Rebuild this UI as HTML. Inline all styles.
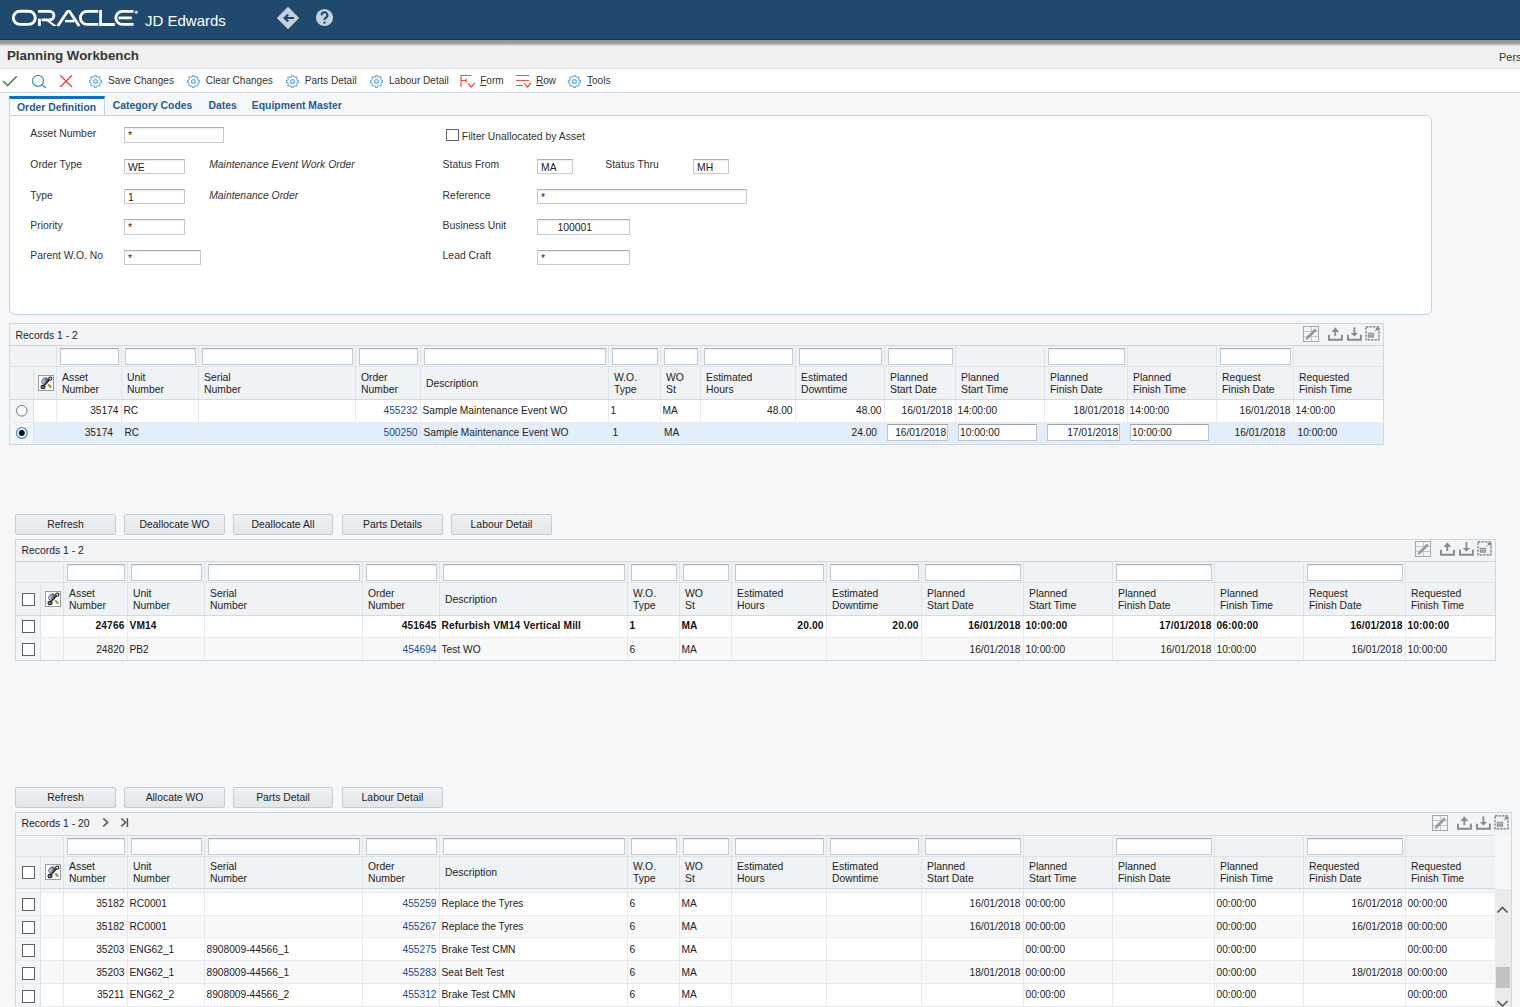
<!DOCTYPE html><html><head><meta charset='utf-8'><style>
*{margin:0;padding:0;box-sizing:border-box}
html,body{width:1520px;height:1007px;overflow:hidden;background:#f6f7f9;font-family:"Liberation Sans", sans-serif;color:#222222}
.a{position:absolute}
.t{position:absolute;white-space:nowrap;font-size:10.4px;line-height:12px}
.d{position:absolute;white-space:nowrap;font-size:10.2px;line-height:12px}
.inp{position:absolute;background:#fff;border:1px solid #c4cad0;border-top-color:#a9b0b7;box-shadow:inset 0 1px 1px rgba(0,0,0,.07)}
.btn{position:absolute;height:21px;border:1px solid #c2ccd6;border-radius:2px;background:linear-gradient(#eff1f3,#e2e6e9);font-size:10.4px;text-align:center;line-height:19px;color:#222}
.cb{position:absolute;width:13px;height:13px;border:1px solid #5f5f5f;background:#fff}
</style></head><body>
<div class='a' style='left:0;top:0;width:1520px;height:39px;background:#1f4a6d'></div>
<div class='a' style='left:0;top:39px;width:1520px;height:1px;background:#2b3036'></div>
<div class='a' style='left:0;top:40px;width:1520px;height:6px;background:linear-gradient(#969696 0%,#9c9c9c 55%,#c4c4c4 78%,#ececec 100%)'></div>
<svg class='a' style='left:0px;top:0px' width='145' height='32' viewBox='0 0 145 32'>
<g fill='none' stroke='#fff' stroke-width='2.8'>
<rect x='13.3' y='11.3' width='22' height='13.1' rx='6.55' ry='6.55' stroke-width='2.9'/>
<path d='M38 11.3 H49.6 a4.3 4.3 0 0 1 0 8.6 H41.6'/>
<path d='M39.4 18.6 V25.9'/>
<path d='M45.3 19.9 L53.3 25.9 H56.9 L48.6 19.9 Z' fill='#fff' stroke='none'/>
<path d='M57.8 25.9 L67.4 11.4 L69.6 11.4 L79.2 25.9' stroke-linejoin='round'/>
<path d='M65 21.1 H74.4' stroke-width='2.5'/>
<path d='M98.3 11.3 H86.9 a6.55 6.55 0 0 0 0 13.1 H98.3'/>
<path d='M100.6 9.9 V24.5 H114.8'/>
<path d='M133.6 11.3 H122.4 a6.55 6.55 0 0 0 0 13.1 H133.6'/>
<path d='M118.6 17.9 H131.8'/>
</g>
<circle cx='136.3' cy='12.2' r='1.6' fill='#c9d3dd'/>
</svg>
<div class='a' style='left:145px;top:10.5px;font-size:15px;line-height:20px;color:#fff;white-space:nowrap'>JD Edwards</div>
<svg class='a' style='left:276px;top:6px' width='24' height='24' viewBox='0 0 24 24'>
<path d='M12 1.8 L22.2 12 L12 22.2 L1.8 12 Z' fill='#c5d0da' stroke='#c5d0da' stroke-width='1.4' stroke-linejoin='round'/>
<path d='M18 12 H9 M12.2 8.5 L8.6 12 L12.2 15.5' stroke='#1f4a6d' stroke-width='2.2' fill='none'/>
</svg>
<svg class='a' style='left:314px;top:7px' width='21' height='21' viewBox='0 0 21 21'>
<circle cx='10.5' cy='10.5' r='8.6' fill='#c5d0da'/>
<path d='M7.6 8.2 a2.9 2.9 0 1 1 4.2 2.5 c-1 .5 -1.3 1 -1.3 2.2' stroke='#1f4a6d' stroke-width='2' fill='none'/>
<circle cx='10.5' cy='15.6' r='1.2' fill='#1f4a6d'/>
</svg>
<div class='a' style='left:0;top:46px;width:1520px;height:22px;background:#f0f0f0'></div>
<div class='a' style='left:0;top:68px;width:1520px;height:1px;background:#dcdfe3'></div>
<div class='a' style='left:7px;top:46.5px;font-size:13.3px;font-weight:bold;line-height:18px;color:#363636;white-space:nowrap'>Planning Workbench</div>
<div class='a' style='left:1499px;top:49.8px;font-size:11px;line-height:14px;color:#333;white-space:nowrap'>Pers</div>
<div class='a' style='left:0;top:69px;width:1520px;height:23px;background:#fff'></div>
<div class='a' style='left:0;top:92px;width:1520px;height:1px;background:#d6dde4'></div>
<svg class='a' style='left:0;top:69px' width='80' height='23' viewBox='0 69 80 23'>
<path d='M3 81 L7.6 85.6 L16.8 76.2' stroke='#3f8f42' stroke-width='1.6' fill='none'/>
<circle cx='38' cy='80.8' r='5.5' stroke='#3b8fd8' stroke-width='1.3' fill='none'/>
<path d='M42 84.6 L45.8 88' stroke='#3b8fd8' stroke-width='1.4'/>
<path d='M60.2 75.2 L72 87 M72 75.2 L60.2 87' stroke='#da4a4f' stroke-width='1.4'/>
</svg>
<svg class='a' style='left:0;top:0' width='620' height='92'><polygon points='95.50,75.40 95.74,75.40 95.98,75.42 96.22,75.44 96.40,75.83 96.53,76.31 96.63,76.78 96.82,76.83 97.00,76.89 97.18,76.95 97.36,77.02 97.53,77.10 97.70,77.18 97.87,77.27 98.03,77.36 98.44,77.10 98.88,76.85 99.28,76.71 99.46,76.86 99.64,77.02 99.81,77.19 99.98,77.36 100.14,77.54 100.29,77.72 100.15,78.12 99.90,78.56 99.64,78.97 99.73,79.13 99.82,79.30 99.90,79.47 99.98,79.64 100.05,79.82 100.11,80.00 100.17,80.18 100.22,80.37 100.69,80.47 101.17,80.60 101.56,80.78 101.58,81.02 101.60,81.26 101.60,81.50 101.60,81.74 101.58,81.98 101.56,82.22 101.17,82.40 100.69,82.53 100.22,82.63 100.17,82.82 100.11,83.00 100.05,83.18 99.98,83.36 99.90,83.53 99.82,83.70 99.73,83.87 99.64,84.03 99.90,84.44 100.15,84.88 100.29,85.28 100.14,85.46 99.98,85.64 99.81,85.81 99.64,85.98 99.46,86.14 99.28,86.29 98.88,86.15 98.44,85.90 98.03,85.64 97.87,85.73 97.70,85.82 97.53,85.90 97.36,85.98 97.18,86.05 97.00,86.11 96.82,86.17 96.63,86.22 96.53,86.69 96.40,87.17 96.22,87.56 95.98,87.58 95.74,87.60 95.50,87.60 95.26,87.60 95.02,87.58 94.78,87.56 94.60,87.17 94.47,86.69 94.37,86.22 94.18,86.17 94.00,86.11 93.82,86.05 93.64,85.98 93.47,85.90 93.30,85.82 93.13,85.73 92.97,85.64 92.56,85.90 92.12,86.15 91.72,86.29 91.54,86.14 91.36,85.98 91.19,85.81 91.02,85.64 90.86,85.46 90.71,85.28 90.85,84.88 91.10,84.44 91.36,84.03 91.27,83.87 91.18,83.70 91.10,83.53 91.02,83.36 90.95,83.18 90.89,83.00 90.83,82.82 90.78,82.63 90.31,82.53 89.83,82.40 89.44,82.22 89.42,81.98 89.40,81.74 89.40,81.50 89.40,81.26 89.42,81.02 89.44,80.78 89.83,80.60 90.31,80.47 90.78,80.37 90.83,80.18 90.89,80.00 90.95,79.82 91.02,79.64 91.10,79.47 91.18,79.30 91.27,79.13 91.36,78.97 91.10,78.56 90.85,78.12 90.71,77.72 90.86,77.54 91.02,77.36 91.19,77.19 91.36,77.02 91.54,76.86 91.72,76.71 92.12,76.85 92.56,77.10 92.97,77.36 93.13,77.27 93.30,77.18 93.47,77.10 93.64,77.02 93.82,76.95 94.00,76.89 94.18,76.83 94.37,76.78 94.47,76.31 94.60,75.83 94.78,75.44 95.02,75.42 95.26,75.40' fill='none' stroke='#62a8e4' stroke-width='1.05' stroke-linejoin='round'/><circle cx='95.5' cy='81.5' r='1.9' fill='none' stroke='#62a8e4' stroke-width='1.2'/><polygon points='193.40,75.40 193.64,75.40 193.88,75.42 194.12,75.44 194.30,75.83 194.43,76.31 194.53,76.78 194.72,76.83 194.90,76.89 195.08,76.95 195.26,77.02 195.43,77.10 195.60,77.18 195.77,77.27 195.93,77.36 196.34,77.10 196.78,76.85 197.18,76.71 197.36,76.86 197.54,77.02 197.71,77.19 197.88,77.36 198.04,77.54 198.19,77.72 198.05,78.12 197.80,78.56 197.54,78.97 197.63,79.13 197.72,79.30 197.80,79.47 197.88,79.64 197.95,79.82 198.01,80.00 198.07,80.18 198.12,80.37 198.59,80.47 199.07,80.60 199.46,80.78 199.48,81.02 199.50,81.26 199.50,81.50 199.50,81.74 199.48,81.98 199.46,82.22 199.07,82.40 198.59,82.53 198.12,82.63 198.07,82.82 198.01,83.00 197.95,83.18 197.88,83.36 197.80,83.53 197.72,83.70 197.63,83.87 197.54,84.03 197.80,84.44 198.05,84.88 198.19,85.28 198.04,85.46 197.88,85.64 197.71,85.81 197.54,85.98 197.36,86.14 197.18,86.29 196.78,86.15 196.34,85.90 195.93,85.64 195.77,85.73 195.60,85.82 195.43,85.90 195.26,85.98 195.08,86.05 194.90,86.11 194.72,86.17 194.53,86.22 194.43,86.69 194.30,87.17 194.12,87.56 193.88,87.58 193.64,87.60 193.40,87.60 193.16,87.60 192.92,87.58 192.68,87.56 192.50,87.17 192.37,86.69 192.27,86.22 192.08,86.17 191.90,86.11 191.72,86.05 191.54,85.98 191.37,85.90 191.20,85.82 191.03,85.73 190.87,85.64 190.46,85.90 190.02,86.15 189.62,86.29 189.44,86.14 189.26,85.98 189.09,85.81 188.92,85.64 188.76,85.46 188.61,85.28 188.75,84.88 189.00,84.44 189.26,84.03 189.17,83.87 189.08,83.70 189.00,83.53 188.92,83.36 188.85,83.18 188.79,83.00 188.73,82.82 188.68,82.63 188.21,82.53 187.73,82.40 187.34,82.22 187.32,81.98 187.30,81.74 187.30,81.50 187.30,81.26 187.32,81.02 187.34,80.78 187.73,80.60 188.21,80.47 188.68,80.37 188.73,80.18 188.79,80.00 188.85,79.82 188.92,79.64 189.00,79.47 189.08,79.30 189.17,79.13 189.26,78.97 189.00,78.56 188.75,78.12 188.61,77.72 188.76,77.54 188.92,77.36 189.09,77.19 189.26,77.02 189.44,76.86 189.62,76.71 190.02,76.85 190.46,77.10 190.87,77.36 191.03,77.27 191.20,77.18 191.37,77.10 191.54,77.02 191.72,76.95 191.90,76.89 192.08,76.83 192.27,76.78 192.37,76.31 192.50,75.83 192.68,75.44 192.92,75.42 193.16,75.40' fill='none' stroke='#62a8e4' stroke-width='1.05' stroke-linejoin='round'/><circle cx='193.4' cy='81.5' r='1.9' fill='none' stroke='#62a8e4' stroke-width='1.2'/><polygon points='292.50,75.40 292.74,75.40 292.98,75.42 293.22,75.44 293.40,75.83 293.53,76.31 293.63,76.78 293.82,76.83 294.00,76.89 294.18,76.95 294.36,77.02 294.53,77.10 294.70,77.18 294.87,77.27 295.03,77.36 295.44,77.10 295.88,76.85 296.28,76.71 296.46,76.86 296.64,77.02 296.81,77.19 296.98,77.36 297.14,77.54 297.29,77.72 297.15,78.12 296.90,78.56 296.64,78.97 296.73,79.13 296.82,79.30 296.90,79.47 296.98,79.64 297.05,79.82 297.11,80.00 297.17,80.18 297.22,80.37 297.69,80.47 298.17,80.60 298.56,80.78 298.58,81.02 298.60,81.26 298.60,81.50 298.60,81.74 298.58,81.98 298.56,82.22 298.17,82.40 297.69,82.53 297.22,82.63 297.17,82.82 297.11,83.00 297.05,83.18 296.98,83.36 296.90,83.53 296.82,83.70 296.73,83.87 296.64,84.03 296.90,84.44 297.15,84.88 297.29,85.28 297.14,85.46 296.98,85.64 296.81,85.81 296.64,85.98 296.46,86.14 296.28,86.29 295.88,86.15 295.44,85.90 295.03,85.64 294.87,85.73 294.70,85.82 294.53,85.90 294.36,85.98 294.18,86.05 294.00,86.11 293.82,86.17 293.63,86.22 293.53,86.69 293.40,87.17 293.22,87.56 292.98,87.58 292.74,87.60 292.50,87.60 292.26,87.60 292.02,87.58 291.78,87.56 291.60,87.17 291.47,86.69 291.37,86.22 291.18,86.17 291.00,86.11 290.82,86.05 290.64,85.98 290.47,85.90 290.30,85.82 290.13,85.73 289.97,85.64 289.56,85.90 289.12,86.15 288.72,86.29 288.54,86.14 288.36,85.98 288.19,85.81 288.02,85.64 287.86,85.46 287.71,85.28 287.85,84.88 288.10,84.44 288.36,84.03 288.27,83.87 288.18,83.70 288.10,83.53 288.02,83.36 287.95,83.18 287.89,83.00 287.83,82.82 287.78,82.63 287.31,82.53 286.83,82.40 286.44,82.22 286.42,81.98 286.40,81.74 286.40,81.50 286.40,81.26 286.42,81.02 286.44,80.78 286.83,80.60 287.31,80.47 287.78,80.37 287.83,80.18 287.89,80.00 287.95,79.82 288.02,79.64 288.10,79.47 288.18,79.30 288.27,79.13 288.36,78.97 288.10,78.56 287.85,78.12 287.71,77.72 287.86,77.54 288.02,77.36 288.19,77.19 288.36,77.02 288.54,76.86 288.72,76.71 289.12,76.85 289.56,77.10 289.97,77.36 290.13,77.27 290.30,77.18 290.47,77.10 290.64,77.02 290.82,76.95 291.00,76.89 291.18,76.83 291.37,76.78 291.47,76.31 291.60,75.83 291.78,75.44 292.02,75.42 292.26,75.40' fill='none' stroke='#62a8e4' stroke-width='1.05' stroke-linejoin='round'/><circle cx='292.5' cy='81.5' r='1.9' fill='none' stroke='#62a8e4' stroke-width='1.2'/><polygon points='376.50,75.40 376.74,75.40 376.98,75.42 377.22,75.44 377.40,75.83 377.53,76.31 377.63,76.78 377.82,76.83 378.00,76.89 378.18,76.95 378.36,77.02 378.53,77.10 378.70,77.18 378.87,77.27 379.03,77.36 379.44,77.10 379.88,76.85 380.28,76.71 380.46,76.86 380.64,77.02 380.81,77.19 380.98,77.36 381.14,77.54 381.29,77.72 381.15,78.12 380.90,78.56 380.64,78.97 380.73,79.13 380.82,79.30 380.90,79.47 380.98,79.64 381.05,79.82 381.11,80.00 381.17,80.18 381.22,80.37 381.69,80.47 382.17,80.60 382.56,80.78 382.58,81.02 382.60,81.26 382.60,81.50 382.60,81.74 382.58,81.98 382.56,82.22 382.17,82.40 381.69,82.53 381.22,82.63 381.17,82.82 381.11,83.00 381.05,83.18 380.98,83.36 380.90,83.53 380.82,83.70 380.73,83.87 380.64,84.03 380.90,84.44 381.15,84.88 381.29,85.28 381.14,85.46 380.98,85.64 380.81,85.81 380.64,85.98 380.46,86.14 380.28,86.29 379.88,86.15 379.44,85.90 379.03,85.64 378.87,85.73 378.70,85.82 378.53,85.90 378.36,85.98 378.18,86.05 378.00,86.11 377.82,86.17 377.63,86.22 377.53,86.69 377.40,87.17 377.22,87.56 376.98,87.58 376.74,87.60 376.50,87.60 376.26,87.60 376.02,87.58 375.78,87.56 375.60,87.17 375.47,86.69 375.37,86.22 375.18,86.17 375.00,86.11 374.82,86.05 374.64,85.98 374.47,85.90 374.30,85.82 374.13,85.73 373.97,85.64 373.56,85.90 373.12,86.15 372.72,86.29 372.54,86.14 372.36,85.98 372.19,85.81 372.02,85.64 371.86,85.46 371.71,85.28 371.85,84.88 372.10,84.44 372.36,84.03 372.27,83.87 372.18,83.70 372.10,83.53 372.02,83.36 371.95,83.18 371.89,83.00 371.83,82.82 371.78,82.63 371.31,82.53 370.83,82.40 370.44,82.22 370.42,81.98 370.40,81.74 370.40,81.50 370.40,81.26 370.42,81.02 370.44,80.78 370.83,80.60 371.31,80.47 371.78,80.37 371.83,80.18 371.89,80.00 371.95,79.82 372.02,79.64 372.10,79.47 372.18,79.30 372.27,79.13 372.36,78.97 372.10,78.56 371.85,78.12 371.71,77.72 371.86,77.54 372.02,77.36 372.19,77.19 372.36,77.02 372.54,76.86 372.72,76.71 373.12,76.85 373.56,77.10 373.97,77.36 374.13,77.27 374.30,77.18 374.47,77.10 374.64,77.02 374.82,76.95 375.00,76.89 375.18,76.83 375.37,76.78 375.47,76.31 375.60,75.83 375.78,75.44 376.02,75.42 376.26,75.40' fill='none' stroke='#62a8e4' stroke-width='1.05' stroke-linejoin='round'/><circle cx='376.5' cy='81.5' r='1.9' fill='none' stroke='#62a8e4' stroke-width='1.2'/><polygon points='574.40,75.40 574.64,75.40 574.88,75.42 575.12,75.44 575.30,75.83 575.43,76.31 575.53,76.78 575.72,76.83 575.90,76.89 576.08,76.95 576.26,77.02 576.43,77.10 576.60,77.18 576.77,77.27 576.93,77.36 577.34,77.10 577.78,76.85 578.18,76.71 578.36,76.86 578.54,77.02 578.71,77.19 578.88,77.36 579.04,77.54 579.19,77.72 579.05,78.12 578.80,78.56 578.54,78.97 578.63,79.13 578.72,79.30 578.80,79.47 578.88,79.64 578.95,79.82 579.01,80.00 579.07,80.18 579.12,80.37 579.59,80.47 580.07,80.60 580.46,80.78 580.48,81.02 580.50,81.26 580.50,81.50 580.50,81.74 580.48,81.98 580.46,82.22 580.07,82.40 579.59,82.53 579.12,82.63 579.07,82.82 579.01,83.00 578.95,83.18 578.88,83.36 578.80,83.53 578.72,83.70 578.63,83.87 578.54,84.03 578.80,84.44 579.05,84.88 579.19,85.28 579.04,85.46 578.88,85.64 578.71,85.81 578.54,85.98 578.36,86.14 578.18,86.29 577.78,86.15 577.34,85.90 576.93,85.64 576.77,85.73 576.60,85.82 576.43,85.90 576.26,85.98 576.08,86.05 575.90,86.11 575.72,86.17 575.53,86.22 575.43,86.69 575.30,87.17 575.12,87.56 574.88,87.58 574.64,87.60 574.40,87.60 574.16,87.60 573.92,87.58 573.68,87.56 573.50,87.17 573.37,86.69 573.27,86.22 573.08,86.17 572.90,86.11 572.72,86.05 572.54,85.98 572.37,85.90 572.20,85.82 572.03,85.73 571.87,85.64 571.46,85.90 571.02,86.15 570.62,86.29 570.44,86.14 570.26,85.98 570.09,85.81 569.92,85.64 569.76,85.46 569.61,85.28 569.75,84.88 570.00,84.44 570.26,84.03 570.17,83.87 570.08,83.70 570.00,83.53 569.92,83.36 569.85,83.18 569.79,83.00 569.73,82.82 569.68,82.63 569.21,82.53 568.73,82.40 568.34,82.22 568.32,81.98 568.30,81.74 568.30,81.50 568.30,81.26 568.32,81.02 568.34,80.78 568.73,80.60 569.21,80.47 569.68,80.37 569.73,80.18 569.79,80.00 569.85,79.82 569.92,79.64 570.00,79.47 570.08,79.30 570.17,79.13 570.26,78.97 570.00,78.56 569.75,78.12 569.61,77.72 569.76,77.54 569.92,77.36 570.09,77.19 570.26,77.02 570.44,76.86 570.62,76.71 571.02,76.85 571.46,77.10 571.87,77.36 572.03,77.27 572.20,77.18 572.37,77.10 572.54,77.02 572.72,76.95 572.90,76.89 573.08,76.83 573.27,76.78 573.37,76.31 573.50,75.83 573.68,75.44 573.92,75.42 574.16,75.40' fill='none' stroke='#62a8e4' stroke-width='1.05' stroke-linejoin='round'/><circle cx='574.4' cy='81.5' r='1.9' fill='none' stroke='#62a8e4' stroke-width='1.2'/><path d='M461 75.5 H471.5 M461 75 V87 M461 80.5 H467 M466 78.5 V82.5 M468 83.5 L471.2 87 L475 83' stroke='#e8553e' stroke-width='1.2' fill='none'/><path d='M516 75.5 H529 M516 80.5 H529 M516 85.5 H523 M524.5 83.5 L527.5 87 L531 83' stroke='#e8553e' stroke-width='1.2' fill='none'/></svg>
<div class='t' style='left:108px;top:74.8px;color:#333;font-size:10.05px'>Save Changes</div>
<div class='t' style='left:205.8px;top:74.8px;color:#333;font-size:10.05px'>Clear Changes</div>
<div class='t' style='left:304.7px;top:74.8px;color:#333;font-size:10.05px'>Parts Detail</div>
<div class='t' style='left:389px;top:74.8px;color:#333;font-size:10.05px'>Labour Detail</div>
<div class='t' style='left:480.2px;top:74.8px;color:#333;font-size:10.05px'><u>F</u>orm</div>
<div class='t' style='left:536px;top:74.8px;color:#333;font-size:10.05px'><u>R</u>ow</div>
<div class='t' style='left:587px;top:74.8px;color:#333;font-size:10.05px'><u>T</u>ools</div>
<div class='a' style='left:9px;top:115px;width:1423px;height:200px;background:#fff;border:1px solid #c5d3e0;border-radius:0 6px 6px 6px'></div>
<div class='a' style='left:9px;top:96px;width:96px;height:19px;background:#fbfcfd;border:1px solid #c5d3e0;border-top:3px solid #0a6fd1;border-bottom:none'></div>
<div class='t' style='left:17px;top:102.2px;font-weight:bold;color:#1f5c99'>Order Definition</div>
<div class='t' style='left:112.7px;top:100.2px;font-weight:bold;color:#1f5c99'>Category Codes</div>
<div class='t' style='left:208.4px;top:100.2px;font-weight:bold;color:#1f5c99'>Dates</div>
<div class='t' style='left:251.8px;top:100.2px;font-weight:bold;color:#1f5c99'>Equipment Master</div>
<div class='t' style='left:30.3px;top:128.1px;color:#333;'>Asset Number</div>
<div class='inp' style='left:124px;top:127px;width:100px;height:16px'></div>
<div class='t' style='left:128px;top:129.5px;color:#222'>*</div>
<div class='t' style='left:30.3px;top:159.4px;color:#333;'>Order Type</div>
<div class='inp' style='left:124px;top:159px;width:61px;height:15px'></div>
<div class='t' style='left:128px;top:161.5px;color:#222'>WE</div>
<div class='t' style='left:209.2px;top:159.4px;color:#333;font-style:italic'>Maintenance Event Work Order</div>
<div class='t' style='left:30.3px;top:189.7px;color:#333;'>Type</div>
<div class='inp' style='left:124px;top:189px;width:61px;height:15px'></div>
<div class='t' style='left:128px;top:191.5px;color:#222'>1</div>
<div class='t' style='left:209.2px;top:189.7px;color:#333;font-style:italic'>Maintenance Order</div>
<div class='t' style='left:30.3px;top:220.2px;color:#333;'>Priority</div>
<div class='inp' style='left:124px;top:219px;width:61px;height:16px'></div>
<div class='t' style='left:128px;top:221.5px;color:#222'>*</div>
<div class='t' style='left:30.3px;top:250.2px;color:#333;'>Parent W.O. No</div>
<div class='inp' style='left:124px;top:250px;width:77px;height:15px'></div>
<div class='t' style='left:128px;top:252.5px;color:#222'>*</div>
<div class='cb' style='left:446px;top:129px;width:13px;height:12px;border-color:#666'></div>
<div class='t' style='left:461.8px;top:130.7px;color:#333;'>Filter Unallocated by Asset</div>
<div class='t' style='left:442.6px;top:159.4px;color:#333;'>Status From</div>
<div class='inp' style='left:537px;top:159px;width:36px;height:15px'></div>
<div class='t' style='left:541px;top:161.5px;color:#222'>MA</div>
<div class='t' style='left:605.3px;top:159.4px;color:#333;'>Status Thru</div>
<div class='inp' style='left:693px;top:159px;width:36px;height:15px'></div>
<div class='t' style='left:697px;top:161.5px;color:#222'>MH</div>
<div class='t' style='left:442.6px;top:189.7px;color:#333;'>Reference</div>
<div class='inp' style='left:537px;top:189px;width:210px;height:15px'></div>
<div class='t' style='left:541px;top:191.5px;color:#222'>*</div>
<div class='t' style='left:442.6px;top:220.2px;color:#333;'>Business Unit</div>
<div class='inp' style='left:537px;top:219px;width:93px;height:16px'></div>
<div class='t' style='left:557.4px;top:221.5px;color:#222'>100001</div>
<div class='t' style='left:442.6px;top:250.2px;color:#333;'>Lead Craft</div>
<div class='inp' style='left:537px;top:250px;width:93px;height:15px'></div>
<div class='t' style='left:541px;top:252.5px;color:#222'>*</div>
<div class='a' style='left:9px;top:323px;width:1375px;height:22px;background:#f2f4f6;'></div>
<div class='a' style='left:9px;top:345px;width:1375px;height:54px;background:#f0f3f6;'></div>
<div class='a' style='left:9px;top:400px;width:1375px;height:22px;background:#ffffff;'></div>
<div class='a' style='left:9px;top:423px;width:1375px;height:21px;background:#e2eef9;'></div>
<div class='a' style='left:9px;top:400px;width:24px;height:22px;background:#f3f6f9;'></div>
<div class='a' style='left:9px;top:423px;width:24px;height:21px;background:#f3f6f9;'></div>
<div class='a' style='left:9px;top:323px;width:1375px;height:1px;background:#cdd8e2;'></div>
<div class='a' style='left:9px;top:323px;width:1px;height:122px;background:#cdd8e2;'></div>
<div class='a' style='left:1383px;top:323px;width:1px;height:122px;background:#cdd8e2;'></div>
<div class='a' style='left:9px;top:345px;width:1375px;height:1px;background:#cdd8e2;'></div>
<div class='a' style='left:9px;top:366px;width:1375px;height:1px;background:#dde5ec;'></div>
<div class='a' style='left:9px;top:399px;width:1375px;height:1px;background:#cfdae4;'></div>
<div class='a' style='left:9px;top:444px;width:1375px;height:1px;background:#cdd8e2;'></div>
<div class='a' style='left:33px;top:366px;width:1px;height:33px;background:#dde5ec;'></div>
<div class='a' style='left:56px;top:345px;width:1px;height:54px;background:#dde5ec;'></div>
<div class='a' style='left:121px;top:345px;width:1px;height:54px;background:#dde5ec;'></div>
<div class='a' style='left:198px;top:345px;width:1px;height:54px;background:#dde5ec;'></div>
<div class='a' style='left:355px;top:345px;width:1px;height:54px;background:#dde5ec;'></div>
<div class='a' style='left:420px;top:345px;width:1px;height:54px;background:#dde5ec;'></div>
<div class='a' style='left:608px;top:345px;width:1px;height:54px;background:#dde5ec;'></div>
<div class='a' style='left:660px;top:345px;width:1px;height:54px;background:#dde5ec;'></div>
<div class='a' style='left:700px;top:345px;width:1px;height:54px;background:#dde5ec;'></div>
<div class='a' style='left:795px;top:345px;width:1px;height:54px;background:#dde5ec;'></div>
<div class='a' style='left:884px;top:345px;width:1px;height:54px;background:#dde5ec;'></div>
<div class='a' style='left:955px;top:345px;width:1px;height:54px;background:#dde5ec;'></div>
<div class='a' style='left:1044px;top:345px;width:1px;height:54px;background:#dde5ec;'></div>
<div class='a' style='left:1127px;top:345px;width:1px;height:54px;background:#dde5ec;'></div>
<div class='a' style='left:1216px;top:345px;width:1px;height:54px;background:#dde5ec;'></div>
<div class='a' style='left:1293px;top:345px;width:1px;height:54px;background:#dde5ec;'></div>
<div class='a' style='left:33px;top:400px;width:1px;height:44px;background:#d8e2ea;'></div>
<div class='a' style='left:56px;top:400px;width:1px;height:44px;background:#e8eaed;'></div>
<div class='a' style='left:121px;top:400px;width:1px;height:44px;background:#e8eaed;'></div>
<div class='a' style='left:198px;top:400px;width:1px;height:44px;background:#e8eaed;'></div>
<div class='a' style='left:355px;top:400px;width:1px;height:44px;background:#e8eaed;'></div>
<div class='a' style='left:420px;top:400px;width:1px;height:44px;background:#e8eaed;'></div>
<div class='a' style='left:608px;top:400px;width:1px;height:44px;background:#e8eaed;'></div>
<div class='a' style='left:660px;top:400px;width:1px;height:44px;background:#e8eaed;'></div>
<div class='a' style='left:700px;top:400px;width:1px;height:44px;background:#e8eaed;'></div>
<div class='a' style='left:795px;top:400px;width:1px;height:44px;background:#e8eaed;'></div>
<div class='a' style='left:884px;top:400px;width:1px;height:44px;background:#e8eaed;'></div>
<div class='a' style='left:955px;top:400px;width:1px;height:44px;background:#e8eaed;'></div>
<div class='a' style='left:1044px;top:400px;width:1px;height:44px;background:#e8eaed;'></div>
<div class='a' style='left:1127px;top:400px;width:1px;height:44px;background:#e8eaed;'></div>
<div class='a' style='left:1216px;top:400px;width:1px;height:44px;background:#e8eaed;'></div>
<div class='a' style='left:1293px;top:400px;width:1px;height:44px;background:#e8eaed;'></div>
<div class='a' style='left:9px;top:422px;width:1375px;height:1px;background:#e9ebee;'></div>
<div class='inp' style='left:60px;top:348px;width:59px;height:17px'></div>
<div class='inp' style='left:125px;top:348px;width:71px;height:17px'></div>
<div class='inp' style='left:202px;top:348px;width:151px;height:17px'></div>
<div class='inp' style='left:359px;top:348px;width:59px;height:17px'></div>
<div class='inp' style='left:424px;top:348px;width:182px;height:17px'></div>
<div class='inp' style='left:612px;top:348px;width:46px;height:17px'></div>
<div class='inp' style='left:664px;top:348px;width:34px;height:17px'></div>
<div class='inp' style='left:704px;top:348px;width:89px;height:17px'></div>
<div class='inp' style='left:799px;top:348px;width:83px;height:17px'></div>
<div class='inp' style='left:888px;top:348px;width:65px;height:17px'></div>
<div class='inp' style='left:1048px;top:348px;width:77px;height:17px'></div>
<div class='inp' style='left:1220px;top:348px;width:71px;height:17px'></div>
<div class='t' style='left:62px;top:372px;line-height:12px'>Asset<br>Number</div>
<div class='t' style='left:127px;top:372px;line-height:12px'>Unit<br>Number</div>
<div class='t' style='left:204px;top:372px;line-height:12px'>Serial<br>Number</div>
<div class='t' style='left:361px;top:372px;line-height:12px'>Order<br>Number</div>
<div class='t' style='left:426px;top:378px'>Description</div>
<div class='t' style='left:614px;top:372px;line-height:12px'>W.O.<br>Type</div>
<div class='t' style='left:666px;top:372px;line-height:12px'>WO<br>St</div>
<div class='t' style='left:706px;top:372px;line-height:12px'>Estimated<br>Hours</div>
<div class='t' style='left:801px;top:372px;line-height:12px'>Estimated<br>Downtime</div>
<div class='t' style='left:890px;top:372px;line-height:12px'>Planned<br>Start Date</div>
<div class='t' style='left:961px;top:372px;line-height:12px'>Planned<br>Start Time</div>
<div class='t' style='left:1050px;top:372px;line-height:12px'>Planned<br>Finish Date</div>
<div class='t' style='left:1133px;top:372px;line-height:12px'>Planned<br>Finish Time</div>
<div class='t' style='left:1222px;top:372px;line-height:12px'>Request<br>Finish Date</div>
<div class='t' style='left:1299px;top:372px;line-height:12px'>Requested<br>Finish Time</div>
<div class='t' style='left:15.5px;top:329.75px'>Records 1 - 2</div>
<svg class='a' style='left:1303px;top:326px' width='80' height='17' viewBox='0 0 80 17'>
<rect x='0.5' y='0.5' width='15' height='15' fill='none' stroke='#a4a7ab'/>
<path d='M1 5.5 H15 M1 10.5 H15 M8.5 1 V15' stroke='#c5c8cc' stroke-width='1'/>
<path d='M4 12.2 L12.8 3.6' stroke='#959aa0' stroke-width='2.8'/>
<path d='M2.8 13.4 L4.3 11.9' stroke='#959aa0' stroke-width='1.4'/>
<g transform='translate(0.9 0)'><path d='M25.1 8.8 V13.7 H38 V8.8' stroke='#858a90' stroke-width='1.9' fill='none'/>
<path d='M27.7 6 L31.4 1.3 L35.2 6 Z' fill='#858a90'/>
<rect x='30.5' y='5.5' width='1.8' height='4.6' fill='#858a90'/>
<path d='M44.1 8.8 V13.7 H57 V8.8' stroke='#858a90' stroke-width='1.9' fill='none'/>
<rect x='49.6' y='1.3' width='1.8' height='6' fill='#858a90'/>
<path d='M46.8 7 L54.2 7 L50.5 10.6 Z' fill='#858a90'/></g>
<rect x='63' y='0.8' width='13' height='13' fill='none' stroke='#6f7378' stroke-width='1.2' stroke-dasharray='2.4 1.1'/>
<rect x='64.8' y='6.8' width='6.3' height='4.9' fill='#8d9196'/>
<path d='M64.8 8.6 H71.1 M66.9 6.8 V11.7 M69 6.8 V11.7' stroke='#c9ccd0' stroke-width='0.6'/>
<path d='M72.1 5.2 L74.7 2.6 M72.7 2.4 H74.9 V4.6' stroke='#6f7378' stroke-width='1' fill='none'/>
</svg>
<svg class='a' style='left:38px;top:375px' width='16' height='16' viewBox='0 0 16 16'>
<defs><linearGradient id='lg38375' x1='0' y1='0' x2='1' y2='1'><stop offset='0' stop-color='#ffffff'/><stop offset='0.45' stop-color='#7fb2e6'/><stop offset='0.6' stop-color='#6d7278'/><stop offset='1' stop-color='#444'/></linearGradient></defs>
<rect x='0.5' y='0.5' width='15' height='15' fill='#fff' stroke='#9b9b9b'/>
<ellipse cx='7' cy='6.2' rx='3.6' ry='2.9' transform='rotate(-45 7 6.2)' fill='url(#lg38375)' stroke='#555' stroke-width='0.9'/>
<circle cx='12.3' cy='3.6' r='1.6' fill='#fff' stroke='#111' stroke-width='1.1'/>
<ellipse cx='5' cy='12' rx='2' ry='1.7' fill='#fff' stroke='#111' stroke-width='1.1'/>
<path d='M4.5 12.5 L11.5 4.5' stroke='#333' stroke-width='1.6'/>
<path d='M10.3 9.3 L13.2 12.6' stroke='#8f8a2c' stroke-width='1.8'/>
</svg>
<div class='d' style='left:56px;width:62.5px;text-align:right;top:404.75px;'>35174</div>
<div class='d' style='left:123.5px;top:404.75px;'>RC</div>
<div class='d' style='left:355px;width:62.5px;text-align:right;top:404.75px;color:#1b4b96;'>455232</div>
<div class='d' style='left:422.5px;top:404.75px;'>Sample Maintenance Event WO</div>
<div class='d' style='left:610.5px;top:404.75px;'>1</div>
<div class='d' style='left:662.5px;top:404.75px;'>MA</div>
<div class='d' style='left:700px;width:92.5px;text-align:right;top:404.75px;'>48.00</div>
<div class='d' style='left:795px;width:86.5px;text-align:right;top:404.75px;'>48.00</div>
<div class='d' style='left:884px;width:68.5px;text-align:right;top:404.75px;'>16/01/2018</div>
<div class='d' style='left:957.5px;top:404.75px;'>14:00:00</div>
<div class='d' style='left:1044px;width:80.5px;text-align:right;top:404.75px;'>18/01/2018</div>
<div class='d' style='left:1129.5px;top:404.75px;'>14:00:00</div>
<div class='d' style='left:1216px;width:74.5px;text-align:right;top:404.75px;'>16/01/2018</div>
<div class='d' style='left:1295.5px;top:404.75px;'>14:00:00</div>
<div class='d' style='left:56px;width:57px;text-align:right;top:427.25px;'>35174</div>
<div class='d' style='left:124.5px;top:427.25px;'>RC</div>
<div class='d' style='left:355px;width:62.5px;text-align:right;top:427.25px;color:#1b4b96;'>500250</div>
<div class='d' style='left:423.5px;top:427.25px;'>Sample Maintenance Event WO</div>
<div class='d' style='left:612.5px;top:427.25px;'>1</div>
<div class='d' style='left:664px;top:427.25px;'>MA</div>
<div class='d' style='left:795px;width:82px;text-align:right;top:427.25px;'>24.00</div>
<div class='d' style='left:1216px;width:69.5px;text-align:right;top:427.25px;'>16/01/2018</div>
<div class='d' style='left:1297.5px;top:427.25px;'>10:00:00</div>
<div class='a' style='left:887px;top:424px;width:61px;height:17px;background:#fff;border:1px solid #bcc3ca;border-top-color:#9ca4ac'></div>
<div class='d' style='left:887px;width:59.2px;text-align:right;top:426.95px'>16/01/2018</div>
<div class='a' style='left:958px;top:424px;width:79px;height:17px;background:#fff;border:1px solid #bcc3ca;border-top-color:#9ca4ac'></div>
<div class='d' style='left:960px;top:426.95px'>10:00:00</div>
<div class='a' style='left:1047px;top:424px;width:73px;height:17px;background:#fff;border:1px solid #bcc3ca;border-top-color:#9ca4ac'></div>
<div class='d' style='left:1047px;width:71.2px;text-align:right;top:426.95px'>17/01/2018</div>
<div class='a' style='left:1130px;top:424px;width:79px;height:17px;background:#fff;border:1px solid #bcc3ca;border-top-color:#9ca4ac'></div>
<div class='d' style='left:1132px;top:426.95px'>10:00:00</div>
<svg class='a' style='left:9px;top:400px' width='24' height='44'>
<circle cx='12.75' cy='10.75' r='5.3' fill='#fff' stroke='#767676' stroke-width='1'/>
<circle cx='12.75' cy='33' r='5.3' fill='#fff' stroke='#3a8ee0' stroke-width='1.2'/>
<circle cx='12.75' cy='33' r='3' fill='#111'/>
</svg>
<div class='btn' style='left:15px;top:514px;width:101px'>Refresh</div>
<div class='btn' style='left:124px;top:514px;width:101px'>Deallocate WO</div>
<div class='btn' style='left:233px;top:514px;width:100px'>Deallocate All</div>
<div class='btn' style='left:342px;top:514px;width:101px'>Parts Details</div>
<div class='btn' style='left:451px;top:514px;width:101px'>Labour Detail</div>
<div class='btn' style='left:15px;top:787px;width:101px'>Refresh</div>
<div class='btn' style='left:124px;top:787px;width:101px'>Allocate WO</div>
<div class='btn' style='left:233px;top:787px;width:100px'>Parts Detail</div>
<div class='btn' style='left:342px;top:787px;width:101px'>Labour Detail</div>
<div class='a' style='left:15px;top:539px;width:1481px;height:22px;background:#f2f4f6;'></div>
<div class='a' style='left:15px;top:561px;width:1481px;height:54px;background:#f0f3f6;'></div>
<div class='a' style='left:15px;top:616px;width:1481px;height:21px;background:#ffffff;'></div>
<div class='a' style='left:15px;top:638px;width:1481px;height:22px;background:#f8f8f8;'></div>
<div class='a' style='left:15px;top:616px;width:25px;height:21px;background:#f3f6f9;'></div>
<div class='a' style='left:15px;top:638px;width:25px;height:22px;background:#f3f6f9;'></div>
<div class='a' style='left:15px;top:539px;width:1481px;height:1px;background:#cdd8e2;'></div>
<div class='a' style='left:15px;top:539px;width:1px;height:122px;background:#cdd8e2;'></div>
<div class='a' style='left:1495px;top:539px;width:1px;height:122px;background:#cdd8e2;'></div>
<div class='a' style='left:15px;top:561px;width:1481px;height:1px;background:#cdd8e2;'></div>
<div class='a' style='left:15px;top:582px;width:1481px;height:1px;background:#dde5ec;'></div>
<div class='a' style='left:15px;top:615px;width:1481px;height:1px;background:#cfdae4;'></div>
<div class='a' style='left:15px;top:660px;width:1481px;height:1px;background:#cdd8e2;'></div>
<div class='a' style='left:40px;top:582px;width:1px;height:33px;background:#dde5ec;'></div>
<div class='a' style='left:63px;top:561px;width:1px;height:54px;background:#dde5ec;'></div>
<div class='a' style='left:127px;top:561px;width:1px;height:54px;background:#dde5ec;'></div>
<div class='a' style='left:204px;top:561px;width:1px;height:54px;background:#dde5ec;'></div>
<div class='a' style='left:362px;top:561px;width:1px;height:54px;background:#dde5ec;'></div>
<div class='a' style='left:439px;top:561px;width:1px;height:54px;background:#dde5ec;'></div>
<div class='a' style='left:627px;top:561px;width:1px;height:54px;background:#dde5ec;'></div>
<div class='a' style='left:679px;top:561px;width:1px;height:54px;background:#dde5ec;'></div>
<div class='a' style='left:731px;top:561px;width:1px;height:54px;background:#dde5ec;'></div>
<div class='a' style='left:826px;top:561px;width:1px;height:54px;background:#dde5ec;'></div>
<div class='a' style='left:921px;top:561px;width:1px;height:54px;background:#dde5ec;'></div>
<div class='a' style='left:1023px;top:561px;width:1px;height:54px;background:#dde5ec;'></div>
<div class='a' style='left:1112px;top:561px;width:1px;height:54px;background:#dde5ec;'></div>
<div class='a' style='left:1214px;top:561px;width:1px;height:54px;background:#dde5ec;'></div>
<div class='a' style='left:1303px;top:561px;width:1px;height:54px;background:#dde5ec;'></div>
<div class='a' style='left:1405px;top:561px;width:1px;height:54px;background:#dde5ec;'></div>
<div class='a' style='left:40px;top:616px;width:1px;height:44px;background:#d8e2ea;'></div>
<div class='a' style='left:63px;top:616px;width:1px;height:44px;background:#e8eaed;'></div>
<div class='a' style='left:127px;top:616px;width:1px;height:44px;background:#e8eaed;'></div>
<div class='a' style='left:204px;top:616px;width:1px;height:44px;background:#e8eaed;'></div>
<div class='a' style='left:362px;top:616px;width:1px;height:44px;background:#e8eaed;'></div>
<div class='a' style='left:439px;top:616px;width:1px;height:44px;background:#e8eaed;'></div>
<div class='a' style='left:627px;top:616px;width:1px;height:44px;background:#e8eaed;'></div>
<div class='a' style='left:679px;top:616px;width:1px;height:44px;background:#e8eaed;'></div>
<div class='a' style='left:731px;top:616px;width:1px;height:44px;background:#e8eaed;'></div>
<div class='a' style='left:826px;top:616px;width:1px;height:44px;background:#e8eaed;'></div>
<div class='a' style='left:921px;top:616px;width:1px;height:44px;background:#e8eaed;'></div>
<div class='a' style='left:1023px;top:616px;width:1px;height:44px;background:#e8eaed;'></div>
<div class='a' style='left:1112px;top:616px;width:1px;height:44px;background:#e8eaed;'></div>
<div class='a' style='left:1214px;top:616px;width:1px;height:44px;background:#e8eaed;'></div>
<div class='a' style='left:1303px;top:616px;width:1px;height:44px;background:#e8eaed;'></div>
<div class='a' style='left:1405px;top:616px;width:1px;height:44px;background:#e8eaed;'></div>
<div class='a' style='left:15px;top:637px;width:1481px;height:1px;background:#e9ebee;'></div>
<div class='inp' style='left:67px;top:564px;width:58px;height:17px'></div>
<div class='inp' style='left:131px;top:564px;width:71px;height:17px'></div>
<div class='inp' style='left:208px;top:564px;width:152px;height:17px'></div>
<div class='inp' style='left:366px;top:564px;width:71px;height:17px'></div>
<div class='inp' style='left:443px;top:564px;width:182px;height:17px'></div>
<div class='inp' style='left:631px;top:564px;width:46px;height:17px'></div>
<div class='inp' style='left:683px;top:564px;width:46px;height:17px'></div>
<div class='inp' style='left:735px;top:564px;width:89px;height:17px'></div>
<div class='inp' style='left:830px;top:564px;width:89px;height:17px'></div>
<div class='inp' style='left:925px;top:564px;width:96px;height:17px'></div>
<div class='inp' style='left:1116px;top:564px;width:96px;height:17px'></div>
<div class='inp' style='left:1307px;top:564px;width:96px;height:17px'></div>
<div class='t' style='left:69px;top:588px;line-height:12px'>Asset<br>Number</div>
<div class='t' style='left:133px;top:588px;line-height:12px'>Unit<br>Number</div>
<div class='t' style='left:210px;top:588px;line-height:12px'>Serial<br>Number</div>
<div class='t' style='left:368px;top:588px;line-height:12px'>Order<br>Number</div>
<div class='t' style='left:445px;top:594px'>Description</div>
<div class='t' style='left:633px;top:588px;line-height:12px'>W.O.<br>Type</div>
<div class='t' style='left:685px;top:588px;line-height:12px'>WO<br>St</div>
<div class='t' style='left:737px;top:588px;line-height:12px'>Estimated<br>Hours</div>
<div class='t' style='left:832px;top:588px;line-height:12px'>Estimated<br>Downtime</div>
<div class='t' style='left:927px;top:588px;line-height:12px'>Planned<br>Start Date</div>
<div class='t' style='left:1029px;top:588px;line-height:12px'>Planned<br>Start Time</div>
<div class='t' style='left:1118px;top:588px;line-height:12px'>Planned<br>Finish Date</div>
<div class='t' style='left:1220px;top:588px;line-height:12px'>Planned<br>Finish Time</div>
<div class='t' style='left:1309px;top:588px;line-height:12px'>Request<br>Finish Date</div>
<div class='t' style='left:1411px;top:588px;line-height:12px'>Requested<br>Finish Time</div>
<div class='t' style='left:21.5px;top:544.75px'>Records 1 - 2</div>
<svg class='a' style='left:1415px;top:541px' width='80' height='17' viewBox='0 0 80 17'>
<rect x='0.5' y='0.5' width='15' height='15' fill='none' stroke='#a4a7ab'/>
<path d='M1 5.5 H15 M1 10.5 H15 M8.5 1 V15' stroke='#c5c8cc' stroke-width='1'/>
<path d='M4 12.2 L12.8 3.6' stroke='#959aa0' stroke-width='2.8'/>
<path d='M2.8 13.4 L4.3 11.9' stroke='#959aa0' stroke-width='1.4'/>
<g transform='translate(0.9 0)'><path d='M25.1 8.8 V13.7 H38 V8.8' stroke='#858a90' stroke-width='1.9' fill='none'/>
<path d='M27.7 6 L31.4 1.3 L35.2 6 Z' fill='#858a90'/>
<rect x='30.5' y='5.5' width='1.8' height='4.6' fill='#858a90'/>
<path d='M44.1 8.8 V13.7 H57 V8.8' stroke='#858a90' stroke-width='1.9' fill='none'/>
<rect x='49.6' y='1.3' width='1.8' height='6' fill='#858a90'/>
<path d='M46.8 7 L54.2 7 L50.5 10.6 Z' fill='#858a90'/></g>
<rect x='63' y='0.8' width='13' height='13' fill='none' stroke='#6f7378' stroke-width='1.2' stroke-dasharray='2.4 1.1'/>
<rect x='64.8' y='6.8' width='6.3' height='4.9' fill='#8d9196'/>
<path d='M64.8 8.6 H71.1 M66.9 6.8 V11.7 M69 6.8 V11.7' stroke='#c9ccd0' stroke-width='0.6'/>
<path d='M72.1 5.2 L74.7 2.6 M72.7 2.4 H74.9 V4.6' stroke='#6f7378' stroke-width='1' fill='none'/>
</svg>
<svg class='a' style='left:45px;top:591px' width='16' height='16' viewBox='0 0 16 16'>
<defs><linearGradient id='lg45591' x1='0' y1='0' x2='1' y2='1'><stop offset='0' stop-color='#ffffff'/><stop offset='0.45' stop-color='#7fb2e6'/><stop offset='0.6' stop-color='#6d7278'/><stop offset='1' stop-color='#444'/></linearGradient></defs>
<rect x='0.5' y='0.5' width='15' height='15' fill='#fff' stroke='#9b9b9b'/>
<ellipse cx='7' cy='6.2' rx='3.6' ry='2.9' transform='rotate(-45 7 6.2)' fill='url(#lg45591)' stroke='#555' stroke-width='0.9'/>
<circle cx='12.3' cy='3.6' r='1.6' fill='#fff' stroke='#111' stroke-width='1.1'/>
<ellipse cx='5' cy='12' rx='2' ry='1.7' fill='#fff' stroke='#111' stroke-width='1.1'/>
<path d='M4.5 12.5 L11.5 4.5' stroke='#333' stroke-width='1.6'/>
<path d='M10.3 9.3 L13.2 12.6' stroke='#8f8a2c' stroke-width='1.8'/>
</svg>
<div class='cb' style='left:22px;top:593px'></div>
<div class='cb' style='left:22px;top:620px'></div>
<div class='cb' style='left:22px;top:643px'></div>
<div class='d' style='left:63px;width:61.5px;text-align:right;top:620.25px;font-weight:bold;color:#111;letter-spacing:0.13px;'>24766</div>
<div class='d' style='left:129.5px;top:620.25px;font-weight:bold;color:#111;letter-spacing:0.13px;'>VM14</div>
<div class='d' style='left:362px;width:74.5px;text-align:right;top:620.25px;font-weight:bold;color:#111;letter-spacing:0.13px;'>451645</div>
<div class='d' style='left:441.5px;top:620.25px;font-weight:bold;color:#111;letter-spacing:0.13px;'>Refurbish VM14 Vertical Mill</div>
<div class='d' style='left:629.5px;top:620.25px;font-weight:bold;color:#111;letter-spacing:0.13px;'>1</div>
<div class='d' style='left:681.5px;top:620.25px;font-weight:bold;color:#111;letter-spacing:0.13px;'>MA</div>
<div class='d' style='left:731px;width:92.5px;text-align:right;top:620.25px;font-weight:bold;color:#111;letter-spacing:0.13px;'>20.00</div>
<div class='d' style='left:826px;width:92.5px;text-align:right;top:620.25px;font-weight:bold;color:#111;letter-spacing:0.13px;'>20.00</div>
<div class='d' style='left:921px;width:99.5px;text-align:right;top:620.25px;font-weight:bold;color:#111;letter-spacing:0.13px;'>16/01/2018</div>
<div class='d' style='left:1025.5px;top:620.25px;font-weight:bold;color:#111;letter-spacing:0.13px;'>10:00:00</div>
<div class='d' style='left:1112px;width:99.5px;text-align:right;top:620.25px;font-weight:bold;color:#111;letter-spacing:0.13px;'>17/01/2018</div>
<div class='d' style='left:1216.5px;top:620.25px;font-weight:bold;color:#111;letter-spacing:0.13px;'>06:00:00</div>
<div class='d' style='left:1303px;width:99.5px;text-align:right;top:620.25px;font-weight:bold;color:#111;letter-spacing:0.13px;'>16/01/2018</div>
<div class='d' style='left:1407.5px;top:620.25px;font-weight:bold;color:#111;letter-spacing:0.13px;'>10:00:00</div>
<div class='d' style='left:63px;width:61.5px;text-align:right;top:644.0px;'>24820</div>
<div class='d' style='left:129.5px;top:644.0px;'>PB2</div>
<div class='d' style='left:362px;width:74.5px;text-align:right;top:644.0px;color:#1b4b96;'>454694</div>
<div class='d' style='left:441.5px;top:644.0px;'>Test WO</div>
<div class='d' style='left:629.5px;top:644.0px;'>6</div>
<div class='d' style='left:681.5px;top:644.0px;'>MA</div>
<div class='d' style='left:921px;width:99.5px;text-align:right;top:644.0px;'>16/01/2018</div>
<div class='d' style='left:1025.5px;top:644.0px;'>10:00:00</div>
<div class='d' style='left:1112px;width:99.5px;text-align:right;top:644.0px;'>16/01/2018</div>
<div class='d' style='left:1216.5px;top:644.0px;'>10:00:00</div>
<div class='d' style='left:1303px;width:99.5px;text-align:right;top:644.0px;'>16/01/2018</div>
<div class='d' style='left:1407.5px;top:644.0px;'>10:00:00</div>
<div class='a' style='left:15px;top:812px;width:1497px;height:23px;background:#f2f4f6;'></div>
<div class='a' style='left:15px;top:835px;width:1480px;height:53px;background:#f0f3f6;'></div>
<div class='a' style='left:15px;top:889px;width:1480px;height:3px;background:#f5f5f5;'></div>
<div class='a' style='left:15px;top:893px;width:1480px;height:22px;background:#ffffff;'></div>
<div class='a' style='left:15px;top:916px;width:1480px;height:21px;background:#f8f8f8;'></div>
<div class='a' style='left:15px;top:938px;width:1480px;height:22px;background:#ffffff;'></div>
<div class='a' style='left:15px;top:961px;width:1480px;height:22px;background:#f8f8f8;'></div>
<div class='a' style='left:15px;top:984px;width:1480px;height:22px;background:#ffffff;'></div>
<div class='a' style='left:15px;top:889px;width:25px;height:3px;background:#f3f6f9;'></div>
<div class='a' style='left:15px;top:893px;width:25px;height:22px;background:#f3f6f9;'></div>
<div class='a' style='left:15px;top:916px;width:25px;height:21px;background:#f3f6f9;'></div>
<div class='a' style='left:15px;top:938px;width:25px;height:22px;background:#f3f6f9;'></div>
<div class='a' style='left:15px;top:961px;width:25px;height:22px;background:#f3f6f9;'></div>
<div class='a' style='left:15px;top:984px;width:25px;height:22px;background:#f3f6f9;'></div>
<div class='a' style='left:15px;top:812px;width:1497px;height:1px;background:#cdd8e2;'></div>
<div class='a' style='left:15px;top:812px;width:1px;height:195px;background:#cdd8e2;'></div>
<div class='a' style='left:1511px;top:812px;width:1px;height:195px;background:#cdd8e2;'></div>
<div class='a' style='left:15px;top:835px;width:1480px;height:1px;background:#cdd8e2;'></div>
<div class='a' style='left:15px;top:856px;width:1480px;height:1px;background:#dde5ec;'></div>
<div class='a' style='left:15px;top:888px;width:1480px;height:1px;background:#cfdae4;'></div>
<div class='a' style='left:40px;top:856px;width:1px;height:32px;background:#dde5ec;'></div>
<div class='a' style='left:63px;top:835px;width:1px;height:53px;background:#dde5ec;'></div>
<div class='a' style='left:127px;top:835px;width:1px;height:53px;background:#dde5ec;'></div>
<div class='a' style='left:204px;top:835px;width:1px;height:53px;background:#dde5ec;'></div>
<div class='a' style='left:362px;top:835px;width:1px;height:53px;background:#dde5ec;'></div>
<div class='a' style='left:439px;top:835px;width:1px;height:53px;background:#dde5ec;'></div>
<div class='a' style='left:627px;top:835px;width:1px;height:53px;background:#dde5ec;'></div>
<div class='a' style='left:679px;top:835px;width:1px;height:53px;background:#dde5ec;'></div>
<div class='a' style='left:731px;top:835px;width:1px;height:53px;background:#dde5ec;'></div>
<div class='a' style='left:826px;top:835px;width:1px;height:53px;background:#dde5ec;'></div>
<div class='a' style='left:921px;top:835px;width:1px;height:53px;background:#dde5ec;'></div>
<div class='a' style='left:1023px;top:835px;width:1px;height:53px;background:#dde5ec;'></div>
<div class='a' style='left:1112px;top:835px;width:1px;height:53px;background:#dde5ec;'></div>
<div class='a' style='left:1214px;top:835px;width:1px;height:53px;background:#dde5ec;'></div>
<div class='a' style='left:1303px;top:835px;width:1px;height:53px;background:#dde5ec;'></div>
<div class='a' style='left:1405px;top:835px;width:1px;height:53px;background:#dde5ec;'></div>
<div class='a' style='left:40px;top:889px;width:1px;height:117px;background:#d8e2ea;'></div>
<div class='a' style='left:63px;top:889px;width:1px;height:117px;background:#e8eaed;'></div>
<div class='a' style='left:127px;top:889px;width:1px;height:117px;background:#e8eaed;'></div>
<div class='a' style='left:204px;top:889px;width:1px;height:117px;background:#e8eaed;'></div>
<div class='a' style='left:362px;top:889px;width:1px;height:117px;background:#e8eaed;'></div>
<div class='a' style='left:439px;top:889px;width:1px;height:117px;background:#e8eaed;'></div>
<div class='a' style='left:627px;top:889px;width:1px;height:117px;background:#e8eaed;'></div>
<div class='a' style='left:679px;top:889px;width:1px;height:117px;background:#e8eaed;'></div>
<div class='a' style='left:731px;top:889px;width:1px;height:117px;background:#e8eaed;'></div>
<div class='a' style='left:826px;top:889px;width:1px;height:117px;background:#e8eaed;'></div>
<div class='a' style='left:921px;top:889px;width:1px;height:117px;background:#e8eaed;'></div>
<div class='a' style='left:1023px;top:889px;width:1px;height:117px;background:#e8eaed;'></div>
<div class='a' style='left:1112px;top:889px;width:1px;height:117px;background:#e8eaed;'></div>
<div class='a' style='left:1214px;top:889px;width:1px;height:117px;background:#e8eaed;'></div>
<div class='a' style='left:1303px;top:889px;width:1px;height:117px;background:#e8eaed;'></div>
<div class='a' style='left:1405px;top:889px;width:1px;height:117px;background:#e8eaed;'></div>
<div class='a' style='left:15px;top:892px;width:1480px;height:1px;background:#e9ebee;'></div>
<div class='a' style='left:15px;top:915px;width:1480px;height:1px;background:#e9ebee;'></div>
<div class='a' style='left:15px;top:937px;width:1480px;height:1px;background:#e9ebee;'></div>
<div class='a' style='left:15px;top:960px;width:1480px;height:1px;background:#e9ebee;'></div>
<div class='a' style='left:15px;top:983px;width:1480px;height:1px;background:#e9ebee;'></div>
<div class='a' style='left:15px;top:1006px;width:1480px;height:1px;background:#e9ebee;'></div>
<div class='inp' style='left:67px;top:838px;width:58px;height:17px'></div>
<div class='inp' style='left:131px;top:838px;width:71px;height:17px'></div>
<div class='inp' style='left:208px;top:838px;width:152px;height:17px'></div>
<div class='inp' style='left:366px;top:838px;width:71px;height:17px'></div>
<div class='inp' style='left:443px;top:838px;width:182px;height:17px'></div>
<div class='inp' style='left:631px;top:838px;width:46px;height:17px'></div>
<div class='inp' style='left:683px;top:838px;width:46px;height:17px'></div>
<div class='inp' style='left:735px;top:838px;width:89px;height:17px'></div>
<div class='inp' style='left:830px;top:838px;width:89px;height:17px'></div>
<div class='inp' style='left:925px;top:838px;width:96px;height:17px'></div>
<div class='inp' style='left:1116px;top:838px;width:96px;height:17px'></div>
<div class='inp' style='left:1307px;top:838px;width:96px;height:17px'></div>
<div class='t' style='left:69px;top:861px;line-height:12px'>Asset<br>Number</div>
<div class='t' style='left:133px;top:861px;line-height:12px'>Unit<br>Number</div>
<div class='t' style='left:210px;top:861px;line-height:12px'>Serial<br>Number</div>
<div class='t' style='left:368px;top:861px;line-height:12px'>Order<br>Number</div>
<div class='t' style='left:445px;top:867px'>Description</div>
<div class='t' style='left:633px;top:861px;line-height:12px'>W.O.<br>Type</div>
<div class='t' style='left:685px;top:861px;line-height:12px'>WO<br>St</div>
<div class='t' style='left:737px;top:861px;line-height:12px'>Estimated<br>Hours</div>
<div class='t' style='left:832px;top:861px;line-height:12px'>Estimated<br>Downtime</div>
<div class='t' style='left:927px;top:861px;line-height:12px'>Planned<br>Start Date</div>
<div class='t' style='left:1029px;top:861px;line-height:12px'>Planned<br>Start Time</div>
<div class='t' style='left:1118px;top:861px;line-height:12px'>Planned<br>Finish Date</div>
<div class='t' style='left:1220px;top:861px;line-height:12px'>Planned<br>Finish Time</div>
<div class='t' style='left:1309px;top:861px;line-height:12px'>Requested<br>Finish Date</div>
<div class='t' style='left:1411px;top:861px;line-height:12px'>Requested<br>Finish Time</div>
<div class='t' style='left:21.5px;top:818px'>Records 1 - 20</div>
<svg class='a' style='left:1432px;top:815px' width='80' height='17' viewBox='0 0 80 17'>
<rect x='0.5' y='0.5' width='15' height='15' fill='none' stroke='#a4a7ab'/>
<path d='M1 5.5 H15 M1 10.5 H15 M8.5 1 V15' stroke='#c5c8cc' stroke-width='1'/>
<path d='M4 12.2 L12.8 3.6' stroke='#959aa0' stroke-width='2.8'/>
<path d='M2.8 13.4 L4.3 11.9' stroke='#959aa0' stroke-width='1.4'/>
<g transform='translate(0.9 0)'><path d='M25.1 8.8 V13.7 H38 V8.8' stroke='#858a90' stroke-width='1.9' fill='none'/>
<path d='M27.7 6 L31.4 1.3 L35.2 6 Z' fill='#858a90'/>
<rect x='30.5' y='5.5' width='1.8' height='4.6' fill='#858a90'/>
<path d='M44.1 8.8 V13.7 H57 V8.8' stroke='#858a90' stroke-width='1.9' fill='none'/>
<rect x='49.6' y='1.3' width='1.8' height='6' fill='#858a90'/>
<path d='M46.8 7 L54.2 7 L50.5 10.6 Z' fill='#858a90'/></g>
<rect x='63' y='0.8' width='13' height='13' fill='none' stroke='#6f7378' stroke-width='1.2' stroke-dasharray='2.4 1.1'/>
<rect x='64.8' y='6.8' width='6.3' height='4.9' fill='#8d9196'/>
<path d='M64.8 8.6 H71.1 M66.9 6.8 V11.7 M69 6.8 V11.7' stroke='#c9ccd0' stroke-width='0.6'/>
<path d='M72.1 5.2 L74.7 2.6 M72.7 2.4 H74.9 V4.6' stroke='#6f7378' stroke-width='1' fill='none'/>
</svg>
<svg class='a' style='left:45px;top:864px' width='16' height='16' viewBox='0 0 16 16'>
<defs><linearGradient id='lg45864' x1='0' y1='0' x2='1' y2='1'><stop offset='0' stop-color='#ffffff'/><stop offset='0.45' stop-color='#7fb2e6'/><stop offset='0.6' stop-color='#6d7278'/><stop offset='1' stop-color='#444'/></linearGradient></defs>
<rect x='0.5' y='0.5' width='15' height='15' fill='#fff' stroke='#9b9b9b'/>
<ellipse cx='7' cy='6.2' rx='3.6' ry='2.9' transform='rotate(-45 7 6.2)' fill='url(#lg45864)' stroke='#555' stroke-width='0.9'/>
<circle cx='12.3' cy='3.6' r='1.6' fill='#fff' stroke='#111' stroke-width='1.1'/>
<ellipse cx='5' cy='12' rx='2' ry='1.7' fill='#fff' stroke='#111' stroke-width='1.1'/>
<path d='M4.5 12.5 L11.5 4.5' stroke='#333' stroke-width='1.6'/>
<path d='M10.3 9.3 L13.2 12.6' stroke='#8f8a2c' stroke-width='1.8'/>
</svg>
<div class='cb' style='left:22px;top:866px'></div>
<div class='cb' style='left:22px;top:898px'></div>
<div class='cb' style='left:22px;top:921px'></div>
<div class='cb' style='left:22px;top:944px'></div>
<div class='cb' style='left:22px;top:967px'></div>
<div class='cb' style='left:22px;top:990px'></div>
<div class='d' style='left:63px;width:61.5px;text-align:right;top:898.0px;'>35182</div>
<div class='d' style='left:129.5px;top:898.0px;'>RC0001</div>
<div class='d' style='left:362px;width:74.5px;text-align:right;top:898.0px;color:#1b4b96;'>455259</div>
<div class='d' style='left:441.5px;top:898.0px;'>Replace the Tyres</div>
<div class='d' style='left:629.5px;top:898.0px;'>6</div>
<div class='d' style='left:681.5px;top:898.0px;'>MA</div>
<div class='d' style='left:921px;width:99.5px;text-align:right;top:898.0px;'>16/01/2018</div>
<div class='d' style='left:1025.5px;top:898.0px;'>00:00:00</div>
<div class='d' style='left:1216.5px;top:898.0px;'>00:00:00</div>
<div class='d' style='left:1303px;width:99.5px;text-align:right;top:898.0px;'>16/01/2018</div>
<div class='d' style='left:1407.5px;top:898.0px;'>00:00:00</div>
<div class='d' style='left:63px;width:61.5px;text-align:right;top:921.0px;'>35182</div>
<div class='d' style='left:129.5px;top:921.0px;'>RC0001</div>
<div class='d' style='left:362px;width:74.5px;text-align:right;top:921.0px;color:#1b4b96;'>455267</div>
<div class='d' style='left:441.5px;top:921.0px;'>Replace the Tyres</div>
<div class='d' style='left:629.5px;top:921.0px;'>6</div>
<div class='d' style='left:681.5px;top:921.0px;'>MA</div>
<div class='d' style='left:921px;width:99.5px;text-align:right;top:921.0px;'>16/01/2018</div>
<div class='d' style='left:1025.5px;top:921.0px;'>00:00:00</div>
<div class='d' style='left:1216.5px;top:921.0px;'>00:00:00</div>
<div class='d' style='left:1303px;width:99.5px;text-align:right;top:921.0px;'>16/01/2018</div>
<div class='d' style='left:1407.5px;top:921.0px;'>00:00:00</div>
<div class='d' style='left:63px;width:61.5px;text-align:right;top:944.0px;'>35203</div>
<div class='d' style='left:129.5px;top:944.0px;'>ENG62_1</div>
<div class='d' style='left:206.5px;top:944.0px;'>8908009-44566_1</div>
<div class='d' style='left:362px;width:74.5px;text-align:right;top:944.0px;color:#1b4b96;'>455275</div>
<div class='d' style='left:441.5px;top:944.0px;'>Brake Test CMN</div>
<div class='d' style='left:629.5px;top:944.0px;'>6</div>
<div class='d' style='left:681.5px;top:944.0px;'>MA</div>
<div class='d' style='left:1025.5px;top:944.0px;'>00:00:00</div>
<div class='d' style='left:1216.5px;top:944.0px;'>00:00:00</div>
<div class='d' style='left:1407.5px;top:944.0px;'>00:00:00</div>
<div class='d' style='left:63px;width:61.5px;text-align:right;top:967.0px;'>35203</div>
<div class='d' style='left:129.5px;top:967.0px;'>ENG62_1</div>
<div class='d' style='left:206.5px;top:967.0px;'>8908009-44566_1</div>
<div class='d' style='left:362px;width:74.5px;text-align:right;top:967.0px;color:#1b4b96;'>455283</div>
<div class='d' style='left:441.5px;top:967.0px;'>Seat Belt Test</div>
<div class='d' style='left:629.5px;top:967.0px;'>6</div>
<div class='d' style='left:681.5px;top:967.0px;'>MA</div>
<div class='d' style='left:921px;width:99.5px;text-align:right;top:967.0px;'>18/01/2018</div>
<div class='d' style='left:1025.5px;top:967.0px;'>00:00:00</div>
<div class='d' style='left:1216.5px;top:967.0px;'>00:00:00</div>
<div class='d' style='left:1303px;width:99.5px;text-align:right;top:967.0px;'>18/01/2018</div>
<div class='d' style='left:1407.5px;top:967.0px;'>00:00:00</div>
<div class='d' style='left:63px;width:61.5px;text-align:right;top:989.0px;'>35211</div>
<div class='d' style='left:129.5px;top:989.0px;'>ENG62_2</div>
<div class='d' style='left:206.5px;top:989.0px;'>8908009-44566_2</div>
<div class='d' style='left:362px;width:74.5px;text-align:right;top:989.0px;color:#1b4b96;'>455312</div>
<div class='d' style='left:441.5px;top:989.0px;'>Brake Test CMN</div>
<div class='d' style='left:629.5px;top:989.0px;'>6</div>
<div class='d' style='left:681.5px;top:989.0px;'>MA</div>
<div class='d' style='left:1025.5px;top:989.0px;'>00:00:00</div>
<div class='d' style='left:1216.5px;top:989.0px;'>00:00:00</div>
<div class='d' style='left:1407.5px;top:989.0px;'>00:00:00</div>
<svg class='a' style='left:100px;top:815px' width='36' height='16'>
<path d='M3.3 3.4 L7.6 7.4 L3.3 11.4' stroke='#5a5a5a' stroke-width='1.5' fill='none'/>
<path d='M21.3 3.4 L25.6 7.4 L21.3 11.4 M27.4 3 V12' stroke='#5a5a5a' stroke-width='1.5' fill='none'/>
</svg>
<div class='a' style='left:1495px;top:889px;width:16px;height:118px;background:#ebebeb;'></div>
<div class='a' style='left:1496px;top:967px;width:14px;height:21px;background:#c2c2c2;'></div>
<svg class='a' style='left:1494px;top:900px' width='17' height='20'><path d='M3.5 12.5 L8.5 7.5 L13.5 12.5' stroke='#555' stroke-width='1.6' fill='none'/></svg>
<svg class='a' style='left:1494px;top:997px' width='17' height='10'><path d='M3.5 4 L8.5 9 L13.5 4' stroke='#555' stroke-width='1.6' fill='none'/></svg></body></html>
